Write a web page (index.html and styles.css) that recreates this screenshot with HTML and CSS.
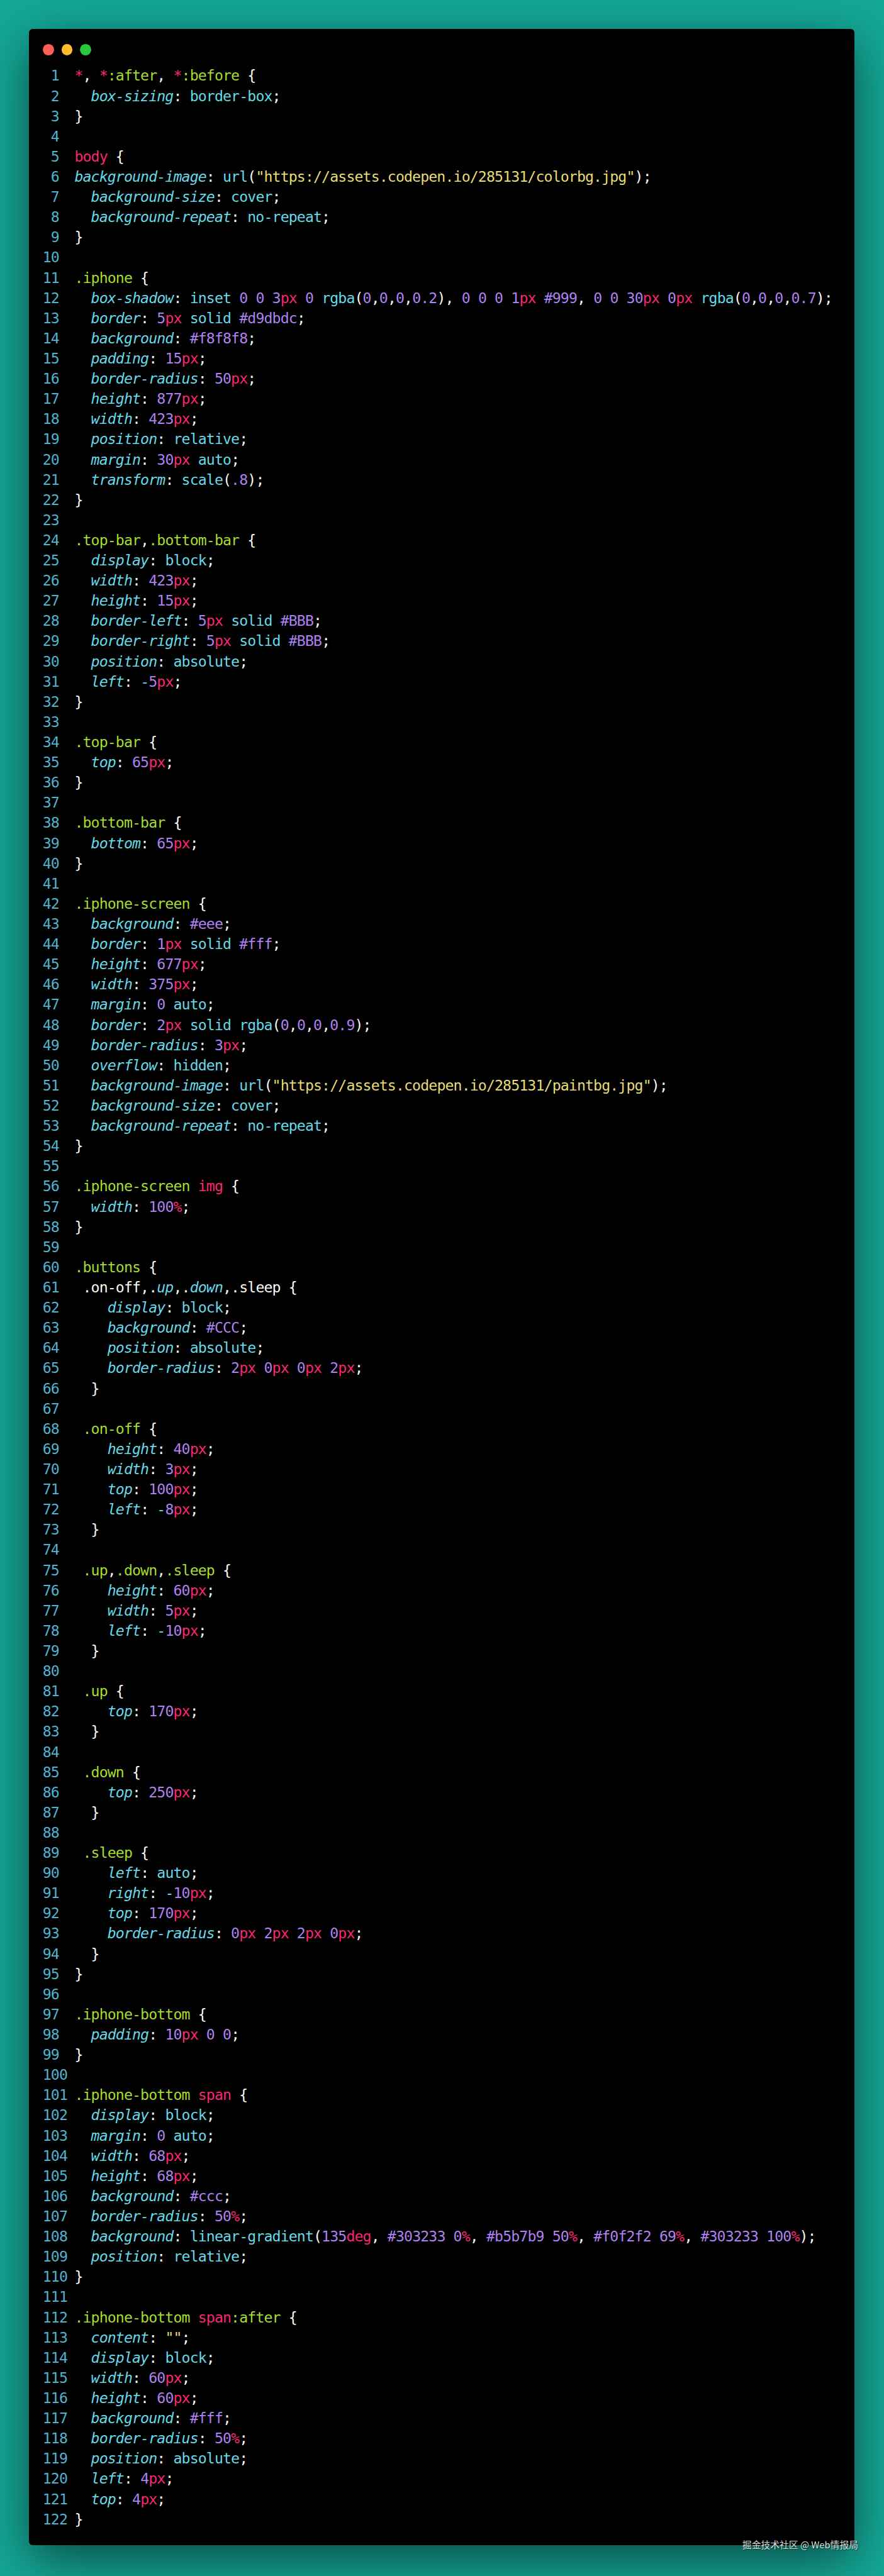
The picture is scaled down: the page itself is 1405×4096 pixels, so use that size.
FILE: index.html
```html
<!DOCTYPE html>
<html lang="zh">
<head>
<meta charset="utf-8">
<title>iPhone CSS</title>
<link rel="stylesheet" href="styles.css">
</head>
<body>
<main class="window">
<header class="lights"><span class="light red"></span><span class="light amber"></span><span class="light green"></span></header>
<div class="listing">
<div class="row"><span class="num"> 1</span><code class="code"><b class="t">*</b>, <b class="t">*</b><b class="g">:after</b>, <b class="t">*</b><b class="g">:before</b> {</code></div>
<div class="row"><span class="num"> 2</span><code class="code">  <b class="p">box-sizing</b>: <b class="v">border-box</b>;</code></div>
<div class="row"><span class="num"> 3</span><code class="code">}</code></div>
<div class="row"><span class="num"> 4</span><code class="code"></code></div>
<div class="row"><span class="num"> 5</span><code class="code"><b class="t">body</b> {</code></div>
<div class="row"><span class="num"> 6</span><code class="code"><b class="p">background-image</b>: <b class="v">url</b>(<b class="s">"https://assets.codepen.io/285131/colorbg.jpg"</b>);</code></div>
<div class="row"><span class="num"> 7</span><code class="code">  <b class="p">background-size</b>: <b class="v">cover</b>;</code></div>
<div class="row"><span class="num"> 8</span><code class="code">  <b class="p">background-repeat</b>: <b class="v">no-repeat</b>;</code></div>
<div class="row"><span class="num"> 9</span><code class="code">}</code></div>
<div class="row"><span class="num">10</span><code class="code"></code></div>
<div class="row"><span class="num">11</span><code class="code"><b class="g">.iphone</b> {</code></div>
<div class="row"><span class="num">12</span><code class="code">  <b class="p">box-shadow</b>: <b class="v">inset</b> <b class="n">0</b> <b class="n">0</b> <b class="n">3</b><b class="u">px</b> <b class="n">0</b> <b class="v">rgba</b>(<b class="n">0</b>,<b class="n">0</b>,<b class="n">0</b>,<b class="n">0.2</b>), <b class="n">0</b> <b class="n">0</b> <b class="n">0</b> <b class="n">1</b><b class="u">px</b> <b class="n">#999</b>, <b class="n">0</b> <b class="n">0</b> <b class="n">30</b><b class="u">px</b> <b class="n">0</b><b class="u">px</b> <b class="v">rgba</b>(<b class="n">0</b>,<b class="n">0</b>,<b class="n">0</b>,<b class="n">0.7</b>);</code></div>
<div class="row"><span class="num">13</span><code class="code">  <b class="p">border</b>: <b class="n">5</b><b class="u">px</b> <b class="v">solid</b> <b class="n">#d9dbdc</b>;</code></div>
<div class="row"><span class="num">14</span><code class="code">  <b class="p">background</b>: <b class="n">#f8f8f8</b>;</code></div>
<div class="row"><span class="num">15</span><code class="code">  <b class="p">padding</b>: <b class="n">15</b><b class="u">px</b>;</code></div>
<div class="row"><span class="num">16</span><code class="code">  <b class="p">border-radius</b>: <b class="n">50</b><b class="u">px</b>;</code></div>
<div class="row"><span class="num">17</span><code class="code">  <b class="p">height</b>: <b class="n">877</b><b class="u">px</b>;</code></div>
<div class="row"><span class="num">18</span><code class="code">  <b class="p">width</b>: <b class="n">423</b><b class="u">px</b>;</code></div>
<div class="row"><span class="num">19</span><code class="code">  <b class="p">position</b>: <b class="v">relative</b>;</code></div>
<div class="row"><span class="num">20</span><code class="code">  <b class="p">margin</b>: <b class="n">30</b><b class="u">px</b> <b class="v">auto</b>;</code></div>
<div class="row"><span class="num">21</span><code class="code">  <b class="p">transform</b>: <b class="v">scale</b>(<b class="n">.8</b>);</code></div>
<div class="row"><span class="num">22</span><code class="code">}</code></div>
<div class="row"><span class="num">23</span><code class="code"></code></div>
<div class="row"><span class="num">24</span><code class="code"><b class="g">.top-bar</b>,<b class="g">.bottom-bar</b> {</code></div>
<div class="row"><span class="num">25</span><code class="code">  <b class="p">display</b>: <b class="v">block</b>;</code></div>
<div class="row"><span class="num">26</span><code class="code">  <b class="p">width</b>: <b class="n">423</b><b class="u">px</b>;</code></div>
<div class="row"><span class="num">27</span><code class="code">  <b class="p">height</b>: <b class="n">15</b><b class="u">px</b>;</code></div>
<div class="row"><span class="num">28</span><code class="code">  <b class="p">border-left</b>: <b class="n">5</b><b class="u">px</b> <b class="v">solid</b> <b class="n">#BBB</b>;</code></div>
<div class="row"><span class="num">29</span><code class="code">  <b class="p">border-right</b>: <b class="n">5</b><b class="u">px</b> <b class="v">solid</b> <b class="n">#BBB</b>;</code></div>
<div class="row"><span class="num">30</span><code class="code">  <b class="p">position</b>: <b class="v">absolute</b>;</code></div>
<div class="row"><span class="num">31</span><code class="code">  <b class="p">left</b>: <b class="v">-</b><b class="n">5</b><b class="u">px</b>;</code></div>
<div class="row"><span class="num">32</span><code class="code">}</code></div>
<div class="row"><span class="num">33</span><code class="code"></code></div>
<div class="row"><span class="num">34</span><code class="code"><b class="g">.top-bar</b> {</code></div>
<div class="row"><span class="num">35</span><code class="code">  <b class="p">top</b>: <b class="n">65</b><b class="u">px</b>;</code></div>
<div class="row"><span class="num">36</span><code class="code">}</code></div>
<div class="row"><span class="num">37</span><code class="code"></code></div>
<div class="row"><span class="num">38</span><code class="code"><b class="g">.bottom-bar</b> {</code></div>
<div class="row"><span class="num">39</span><code class="code">  <b class="p">bottom</b>: <b class="n">65</b><b class="u">px</b>;</code></div>
<div class="row"><span class="num">40</span><code class="code">}</code></div>
<div class="row"><span class="num">41</span><code class="code"></code></div>
<div class="row"><span class="num">42</span><code class="code"><b class="g">.iphone-screen</b> {</code></div>
<div class="row"><span class="num">43</span><code class="code">  <b class="p">background</b>: <b class="n">#eee</b>;</code></div>
<div class="row"><span class="num">44</span><code class="code">  <b class="p">border</b>: <b class="n">1</b><b class="u">px</b> <b class="v">solid</b> <b class="n">#fff</b>;</code></div>
<div class="row"><span class="num">45</span><code class="code">  <b class="p">height</b>: <b class="n">677</b><b class="u">px</b>;</code></div>
<div class="row"><span class="num">46</span><code class="code">  <b class="p">width</b>: <b class="n">375</b><b class="u">px</b>;</code></div>
<div class="row"><span class="num">47</span><code class="code">  <b class="p">margin</b>: <b class="n">0</b> <b class="v">auto</b>;</code></div>
<div class="row"><span class="num">48</span><code class="code">  <b class="p">border</b>: <b class="n">2</b><b class="u">px</b> <b class="v">solid</b> <b class="v">rgba</b>(<b class="n">0</b>,<b class="n">0</b>,<b class="n">0</b>,<b class="n">0.9</b>);</code></div>
<div class="row"><span class="num">49</span><code class="code">  <b class="p">border-radius</b>: <b class="n">3</b><b class="u">px</b>;</code></div>
<div class="row"><span class="num">50</span><code class="code">  <b class="p">overflow</b>: <b class="v">hidden</b>;</code></div>
<div class="row"><span class="num">51</span><code class="code">  <b class="p">background-image</b>: <b class="v">url</b>(<b class="s">"https://assets.codepen.io/285131/paintbg.jpg"</b>);</code></div>
<div class="row"><span class="num">52</span><code class="code">  <b class="p">background-size</b>: <b class="v">cover</b>;</code></div>
<div class="row"><span class="num">53</span><code class="code">  <b class="p">background-repeat</b>: <b class="v">no-repeat</b>;</code></div>
<div class="row"><span class="num">54</span><code class="code">}</code></div>
<div class="row"><span class="num">55</span><code class="code"></code></div>
<div class="row"><span class="num">56</span><code class="code"><b class="g">.iphone-screen</b> <b class="t">img</b> {</code></div>
<div class="row"><span class="num">57</span><code class="code">  <b class="p">width</b>: <b class="n">100</b><b class="u">%</b>;</code></div>
<div class="row"><span class="num">58</span><code class="code">}</code></div>
<div class="row"><span class="num">59</span><code class="code"></code></div>
<div class="row"><span class="num">60</span><code class="code"><b class="g">.buttons</b> {</code></div>
<div class="row"><span class="num">61</span><code class="code"> .on-off,.<b class="p">up</b>,.<b class="p">down</b>,.sleep {</code></div>
<div class="row"><span class="num">62</span><code class="code">    <b class="p">display</b>: <b class="v">block</b>;</code></div>
<div class="row"><span class="num">63</span><code class="code">    <b class="p">background</b>: <b class="n">#CCC</b>;</code></div>
<div class="row"><span class="num">64</span><code class="code">    <b class="p">position</b>: <b class="v">absolute</b>;</code></div>
<div class="row"><span class="num">65</span><code class="code">    <b class="p">border-radius</b>: <b class="n">2</b><b class="u">px</b> <b class="n">0</b><b class="u">px</b> <b class="n">0</b><b class="u">px</b> <b class="n">2</b><b class="u">px</b>;</code></div>
<div class="row"><span class="num">66</span><code class="code">  }</code></div>
<div class="row"><span class="num">67</span><code class="code"></code></div>
<div class="row"><span class="num">68</span><code class="code"> <b class="g">.on-off</b> {</code></div>
<div class="row"><span class="num">69</span><code class="code">    <b class="p">height</b>: <b class="n">40</b><b class="u">px</b>;</code></div>
<div class="row"><span class="num">70</span><code class="code">    <b class="p">width</b>: <b class="n">3</b><b class="u">px</b>;</code></div>
<div class="row"><span class="num">71</span><code class="code">    <b class="p">top</b>: <b class="n">100</b><b class="u">px</b>;</code></div>
<div class="row"><span class="num">72</span><code class="code">    <b class="p">left</b>: <b class="v">-</b><b class="n">8</b><b class="u">px</b>;</code></div>
<div class="row"><span class="num">73</span><code class="code">  }</code></div>
<div class="row"><span class="num">74</span><code class="code"></code></div>
<div class="row"><span class="num">75</span><code class="code"> <b class="g">.up</b>,<b class="g">.down</b>,<b class="g">.sleep</b> {</code></div>
<div class="row"><span class="num">76</span><code class="code">    <b class="p">height</b>: <b class="n">60</b><b class="u">px</b>;</code></div>
<div class="row"><span class="num">77</span><code class="code">    <b class="p">width</b>: <b class="n">5</b><b class="u">px</b>;</code></div>
<div class="row"><span class="num">78</span><code class="code">    <b class="p">left</b>: <b class="v">-</b><b class="n">10</b><b class="u">px</b>;</code></div>
<div class="row"><span class="num">79</span><code class="code">  }</code></div>
<div class="row"><span class="num">80</span><code class="code"></code></div>
<div class="row"><span class="num">81</span><code class="code"> <b class="g">.up</b> {</code></div>
<div class="row"><span class="num">82</span><code class="code">    <b class="p">top</b>: <b class="n">170</b><b class="u">px</b>;</code></div>
<div class="row"><span class="num">83</span><code class="code">  }</code></div>
<div class="row"><span class="num">84</span><code class="code"></code></div>
<div class="row"><span class="num">85</span><code class="code"> <b class="g">.down</b> {</code></div>
<div class="row"><span class="num">86</span><code class="code">    <b class="p">top</b>: <b class="n">250</b><b class="u">px</b>;</code></div>
<div class="row"><span class="num">87</span><code class="code">  }</code></div>
<div class="row"><span class="num">88</span><code class="code"></code></div>
<div class="row"><span class="num">89</span><code class="code"> <b class="g">.sleep</b> {</code></div>
<div class="row"><span class="num">90</span><code class="code">    <b class="p">left</b>: <b class="v">auto</b>;</code></div>
<div class="row"><span class="num">91</span><code class="code">    <b class="p">right</b>: <b class="v">-</b><b class="n">10</b><b class="u">px</b>;</code></div>
<div class="row"><span class="num">92</span><code class="code">    <b class="p">top</b>: <b class="n">170</b><b class="u">px</b>;</code></div>
<div class="row"><span class="num">93</span><code class="code">    <b class="p">border-radius</b>: <b class="n">0</b><b class="u">px</b> <b class="n">2</b><b class="u">px</b> <b class="n">2</b><b class="u">px</b> <b class="n">0</b><b class="u">px</b>;</code></div>
<div class="row"><span class="num">94</span><code class="code">  }</code></div>
<div class="row"><span class="num">95</span><code class="code">}</code></div>
<div class="row"><span class="num">96</span><code class="code"></code></div>
<div class="row"><span class="num">97</span><code class="code"><b class="g">.iphone-bottom</b> {</code></div>
<div class="row"><span class="num">98</span><code class="code">  <b class="p">padding</b>: <b class="n">10</b><b class="u">px</b> <b class="n">0</b> <b class="n">0</b>;</code></div>
<div class="row"><span class="num">99</span><code class="code">}</code></div>
<div class="row"><span class="num">100</span><code class="code"></code></div>
<div class="row"><span class="num">101</span><code class="code"><b class="g">.iphone-bottom</b> <b class="t">span</b> {</code></div>
<div class="row"><span class="num">102</span><code class="code">  <b class="p">display</b>: <b class="v">block</b>;</code></div>
<div class="row"><span class="num">103</span><code class="code">  <b class="p">margin</b>: <b class="n">0</b> <b class="v">auto</b>;</code></div>
<div class="row"><span class="num">104</span><code class="code">  <b class="p">width</b>: <b class="n">68</b><b class="u">px</b>;</code></div>
<div class="row"><span class="num">105</span><code class="code">  <b class="p">height</b>: <b class="n">68</b><b class="u">px</b>;</code></div>
<div class="row"><span class="num">106</span><code class="code">  <b class="p">background</b>: <b class="n">#ccc</b>;</code></div>
<div class="row"><span class="num">107</span><code class="code">  <b class="p">border-radius</b>: <b class="n">50</b><b class="u">%</b>;</code></div>
<div class="row"><span class="num">108</span><code class="code">  <b class="p">background</b>: <b class="v">linear-gradient</b>(<b class="n">135</b><b class="u">deg</b>, <b class="n">#303233</b> <b class="n">0</b><b class="u">%</b>, <b class="n">#b5b7b9</b> <b class="n">50</b><b class="u">%</b>, <b class="n">#f0f2f2</b> <b class="n">69</b><b class="u">%</b>, <b class="n">#303233</b> <b class="n">100</b><b class="u">%</b>);</code></div>
<div class="row"><span class="num">109</span><code class="code">  <b class="p">position</b>: <b class="v">relative</b>;</code></div>
<div class="row"><span class="num">110</span><code class="code">}</code></div>
<div class="row"><span class="num">111</span><code class="code"></code></div>
<div class="row"><span class="num">112</span><code class="code"><b class="g">.iphone-bottom</b> <b class="t">span</b><b class="g">:after</b> {</code></div>
<div class="row"><span class="num">113</span><code class="code">  <b class="p">content</b>: <b class="s">""</b>;</code></div>
<div class="row"><span class="num">114</span><code class="code">  <b class="p">display</b>: <b class="v">block</b>;</code></div>
<div class="row"><span class="num">115</span><code class="code">  <b class="p">width</b>: <b class="n">60</b><b class="u">px</b>;</code></div>
<div class="row"><span class="num">116</span><code class="code">  <b class="p">height</b>: <b class="n">60</b><b class="u">px</b>;</code></div>
<div class="row"><span class="num">117</span><code class="code">  <b class="p">background</b>: <b class="n">#fff</b>;</code></div>
<div class="row"><span class="num">118</span><code class="code">  <b class="p">border-radius</b>: <b class="n">50</b><b class="u">%</b>;</code></div>
<div class="row"><span class="num">119</span><code class="code">  <b class="p">position</b>: <b class="v">absolute</b>;</code></div>
<div class="row"><span class="num">120</span><code class="code">  <b class="p">left</b>: <b class="n">4</b><b class="u">px</b>;</code></div>
<div class="row"><span class="num">121</span><code class="code">  <b class="p">top</b>: <b class="n">4</b><b class="u">px</b>;</code></div>
<div class="row"><span class="num">122</span><code class="code">}</code></div>
</div>
</main>
<p class="watermark">掘金技术社区 @ Web情报局</p>
</body>
</html>
```
FILE: styles.css
```css
html, body {
  margin: 0;
  padding: 0;
}

body {
  position: relative;
  box-sizing: border-box;
  width: 1405px;
  height: 4096px;
  padding: 46.4px 47.2px 0 46.4px;
  background: #14a897;
  overflow: hidden;
}

.window {
  box-sizing: border-box;
  height: 4000.6px;
  padding: 23.8px 0 0 21.4px;
  border-radius: 6px;
  background: #000;
  box-shadow: 0 24px 81px rgba(0, 0, 0, 0.55);
}

.lights {
  display: flex;
  gap: 11.9px;
  margin-bottom: 16.4px;
}

.light {
  width: 17.85px;
  height: 17.85px;
  border-radius: 50%;
}

.red { background: #ff5f56; }
.amber { background: #ffbd2e; }
.green { background: #27c93f; }

.row {
  display: flex;
  height: 32.12px;
  font: 400 23.2px/32.12px "DejaVu Sans Mono", "Liberation Mono", monospace;
  letter-spacing: -0.87px;
  color: #f8f8f2;
  white-space: pre;
}

.num {
  flex: 0 0 50.6px;
  color: #4fb4d0;
}

.code {
  font: inherit;
}

.code b {
  font-weight: 400;
}

.p { color: #66d9e8; font-style: italic; }
.v { color: #66d9e8; }
.n { color: #ae81f0; }
.u { color: #f92672; }
.t { color: #f92672; }
.g { color: #a6dc2e; }
.s { color: #e6db74; }

.watermark {
  position: absolute;
  right: 41px;
  top: 4036px;
  margin: 0;
  font: 400 14.8px/20px "Noto Sans CJK SC", "Liberation Sans", sans-serif;
  color: #d9dddd;
  text-shadow: 1px 1px 1px rgba(0, 0, 0, 0.6);
  white-space: nowrap;
}
```
